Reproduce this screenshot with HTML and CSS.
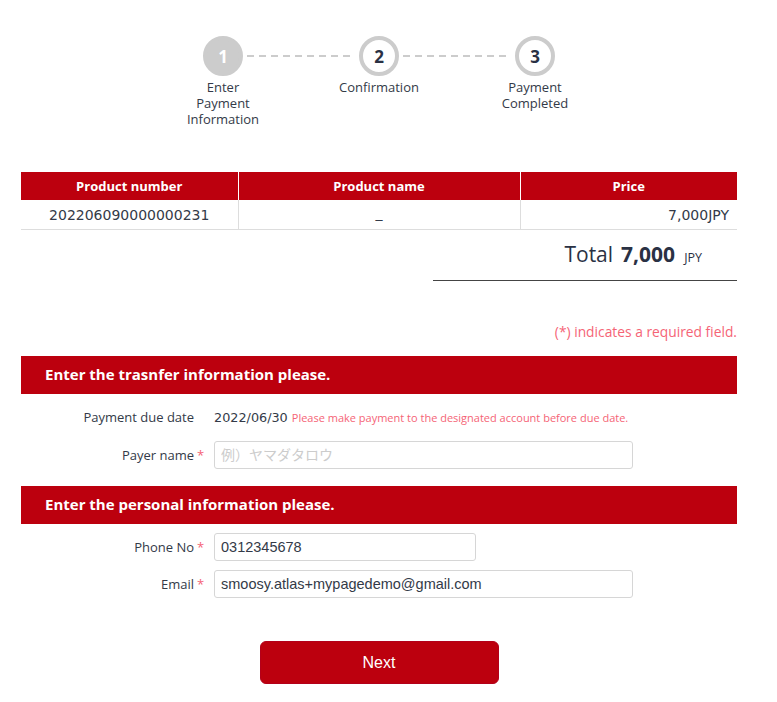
FILE: index.html
```html
<!DOCTYPE html>
<html lang="en">
<head>
<meta charset="utf-8">
<title>Payment</title>
<link rel="stylesheet" href="styles.css">
</head>
<body>
<div class="page">
  <div class="steps">
    <div class="step-track">
      <div class="circle done">1</div>
      <div class="dash"></div>
      <div class="circle">2</div>
      <div class="dash"></div>
      <div class="circle">3</div>
    </div>
    <div class="step-labels">
      <div class="step-label">Enter<br>Payment<br>Information</div>
      <div class="step-label">Confirmation</div>
      <div class="step-label">Payment<br>Completed</div>
    </div>
  </div>

  <table class="products">
    <colgroup>
      <col class="w-num">
      <col class="w-name">
      <col class="w-price">
    </colgroup>
    <thead>
      <tr>
        <th>Product number</th>
        <th>Product name</th>
        <th>Price</th>
      </tr>
    </thead>
    <tbody>
      <tr>
        <td class="c-num">202206090000000231</td>
        <td class="c-name">_</td>
        <td class="c-price">7,000JPY</td>
      </tr>
    </tbody>
  </table>

  <div class="total-wrap">
    <div class="total"><span class="t-label">Total</span><span class="t-amount">7,000</span><span class="t-cur">JPY</span></div>
  </div>

  <p class="req-note">(*) indicates a required field.</p>

  <h2 class="sec-head">Enter the trasnfer information please.</h2>
  <div class="form first">
    <div class="row">
      <div class="lbl">Payment due date</div>
      <div class="star"></div>
      <div class="val"><span class="date">2022/06/30</span><span class="warn">Please make payment to the designated account before due date.</span></div>
    </div>
    <div class="row">
      <div class="lbl">Payer name</div>
      <div class="star">*</div>
      <div class="val"><input class="inp wide" type="text" placeholder="例）ヤマダタロウ"></div>
    </div>
  </div>

  <h2 class="sec-head">Enter the personal information please.</h2>
  <div class="form">
    <div class="row">
      <div class="lbl">Phone No</div>
      <div class="star">*</div>
      <div class="val"><input class="inp short" type="text" value="0312345678"></div>
    </div>
    <div class="row">
      <div class="lbl">Email</div>
      <div class="star">*</div>
      <div class="val"><input class="inp wide" type="text" value="smoosy.atlas+mypagedemo@gmail.com"></div>
    </div>
  </div>

  <div class="actions">
    <button class="next" type="button">Next</button>
  </div>
</div>
</body>
</html>
```

FILE: styles.css
```css
html, body {
  margin: 0;
  padding: 0;
  background: #fff;
}
body {
  font-family: "Open Sans", "Noto Sans CJK JP", sans-serif;
  color: #333a48;
  font-size: 13px;
}
.page {
  width: 716px;
  margin-left: 21px;
  padding-top: 36px;
}

/* steps */
.steps {
  display: flex;
  flex-direction: column;
  align-items: center;
}
.step-track {
  display: flex;
  align-items: center;
}
.circle {
  width: 40px;
  height: 40px;
  box-sizing: border-box;
  border-radius: 50%;
  border: 4px solid #cccccc;
  background: #fff;
  color: #2a3144;
  font-weight: 700;
  font-size: 17px;
  display: flex;
  align-items: center;
  justify-content: center;
}
.circle.done {
  background: #cccccc;
  color: #fff;
}
.dash {
  width: 108px;
  margin: 0 4px;
  height: 2px;
  background: repeating-linear-gradient(to right, #cccccc 0 7px, transparent 7px 12px);
}
.step-labels {
  display: grid;
  grid-template-columns: repeat(3, 156px);
  margin-top: 3px;
}
.step-label {
  text-align: center;
  line-height: 16px;
}

/* table */
.products {
  width: 716px;
  border-collapse: collapse;
  margin-top: 45px;
  table-layout: fixed;
}
.w-num { width: 217px; }
.w-name { width: 282px; }
.w-price { width: 217px; }
.products th {
  background: #bc000e;
  color: #fff;
  font-weight: 700;
  font-size: 13px;
  height: 28px;
  padding: 0;
  border-left: 1px solid #fff;
}
.products th:first-child { border-left: 0; }
.products td {
  height: 29px;
  padding: 0 8px;
  font-family: "DejaVu Sans", sans-serif;
  font-size: 14px;
  color: #333a48;
  border-bottom: 1px solid #dddddd;
  border-left: 1px solid #dddddd;
}
.products td:first-child { border-left: 0; }
.c-num { text-align: center; }
.c-name { text-align: center; }
.c-price { text-align: right; }
.products td.c-name { vertical-align: top; padding-top: 5px; height: 24px; }

.total-wrap {
  display: flex;
  justify-content: flex-end;
}
.total {
  width: 304px;
  height: 51px;
  box-sizing: border-box;
  border-bottom: 1px solid #444;
  display: flex;
  justify-content: flex-end;
  align-items: baseline;
  padding-right: 35px;
  padding-top: 10px;
  color: #2a3144;
}
.t-label { font-size: 21px; margin-right: 8px; }
.t-amount { font-size: 21px; font-weight: 700; margin-right: 9px; }
.t-cur { font-size: 12.5px; }

.req-note {
  margin: 42px 0 0 0;
  text-align: right;
  color: #f56476;
  font-size: 13.8px;
  line-height: 18px;
}

.sec-head {
  margin: 0;
  background: #bc000e;
  color: #fff;
  font-size: 15px;
  font-weight: 700;
  height: 38px;
  line-height: 36px;
  padding: 0 0 0 24px;
}
.req-note + .sec-head { margin-top: 15px; }

.form {
  padding: 9px 0 17px 0;
  display: flex;
  flex-direction: column;
  gap: 9px;
}
.form.first { padding-top: 9px; gap: 10px; }
.row {
  display: grid;
  grid-template-columns: 173px 20px 1fr;
  align-items: center;
  min-height: 28px;
}
.lbl {
  text-align: right;
}
.star {
  color: #f56476;
  text-align: left;
  font-size: 13px;
  padding-left: 3px;
}
.val { display: flex; align-items: center; }
.date {
  font-family: "DejaVu Sans", sans-serif;
  font-size: 12.8px;
}
.warn {
  color: #f56476;
  font-size: 11px;
  margin-left: 4px;
}
.inp {
  box-sizing: border-box;
  height: 28px;
  border: 1px solid #d6d6d6;
  border-radius: 3px;
  padding: 0 6px;
  font-family: "Liberation Sans", Arial, "Noto Sans CJK JP", sans-serif;
  font-size: 14.5px;
  color: #333a48;
  outline: none;
}
.inp::placeholder { color: #cccccc; font-size: 14px; }
.inp.wide { width: 419px; }
.inp.short { width: 262px; }

.actions {
  display: flex;
  justify-content: center;
  padding-top: 26px;
  padding-bottom: 20px;
}
.next {
  width: 239px;
  height: 43px;
  border: 1px solid #b3001a;
  border-radius: 6px;
  background: #bc000e;
  color: #fff;
  font-family: "Liberation Sans", Arial, sans-serif;
  font-size: 16px;
}
```
